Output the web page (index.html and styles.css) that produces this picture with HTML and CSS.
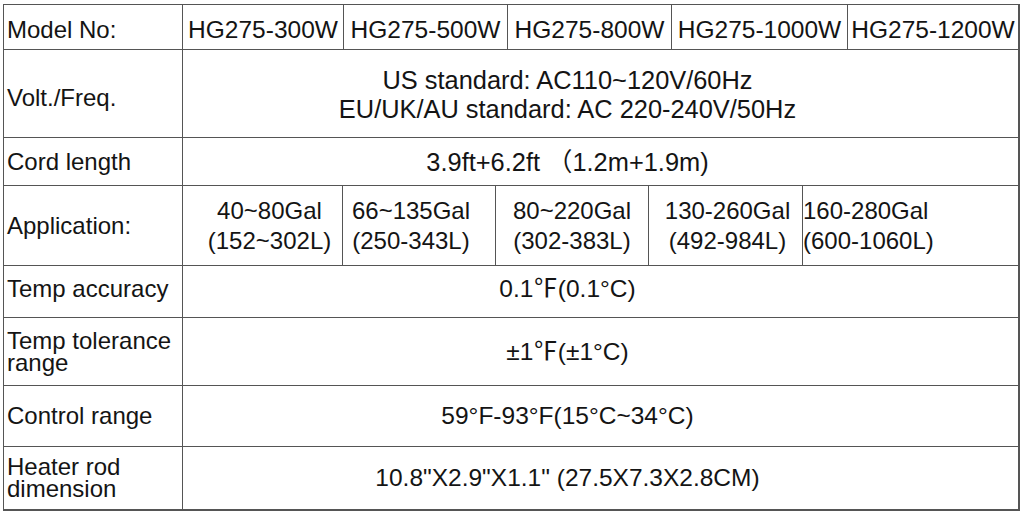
FILE: index.html
```html
<!DOCTYPE html>
<html lang="en">
<head>
<meta charset="utf-8">
<title>HG275 Specifications</title>
<link rel="stylesheet" href="styles.css">
</head>
<body>
<div class="sheet">
  <div class="row">
    <div class="label down">Model No:</div>
    <div class="split">
      <div class="model m1 down">HG275-300W</div>
      <div class="model m2 down">HG275-500W</div>
      <div class="model m3 down">HG275-800W</div>
      <div class="model m4 down">HG275-1000W</div>
      <div class="model m5 down">HG275-1200W</div>
    </div>
  </div>
  <div class="row">
    <div class="label down-more">Volt./Freq.</div>
    <div class="value big">
      <div>US standard: AC110~120V/60Hz</div>
      <div>EU/UK/AU standard: AC 220-240V/50Hz</div>
    </div>
  </div>
  <div class="row">
    <div class="label">Cord length</div>
    <div class="value big">3.9ft+6.2ft （1.2m+1.9m)</div>
  </div>
  <div class="row">
    <div class="label">Application:</div>
    <div class="split">
      <div class="app a1"><div>40~80Gal</div><div>(152~302L)</div></div>
      <div class="app a2"><div>66~135Gal</div><div>(250-343L)</div></div>
      <div class="app a3"><div>80~220Gal</div><div>(302-383L)</div></div>
      <div class="app a4"><div>130-260Gal</div><div>(492-984L)</div></div>
      <div class="app a5"><div>160-280Gal</div><div>(600-1060L)</div></div>
    </div>
  </div>
  <div class="row">
    <div class="label up">Temp accuracy</div>
    <div class="value up">0.1℉(0.1°C)</div>
  </div>
  <div class="row">
    <div class="label">Temp tolerance<br>range</div>
    <div class="value">±1℉(±1°C)</div>
  </div>
  <div class="row">
    <div class="label">Control range</div>
    <div class="value">59°F-93°F(15°C~34°C)</div>
  </div>
  <div class="row last">
    <div class="label">Heater rod<br>dimension</div>
    <div class="value">10.8"X2.9"X1.1" (27.5X7.3X2.8CM)</div>
  </div>
</div>
</body>
</html>
```

FILE: styles.css
```css
html, body {
  margin: 0;
  padding: 0;
  background: #ffffff;
}

body {
  font-family: "Liberation Sans", Arial, "Noto Sans CJK SC", sans-serif;
  color: #141414;
  font-size: 24px;
}

.sheet {
  margin: 4px 0 0 3px;
  width: 1017px;
  height: 507px;
  box-sizing: border-box;
  border-left: 1px solid #555;
  border-top: 1px solid #555;
  border-right: 2px solid #555;
  border-bottom: 2px solid #555;
  display: grid;
  grid-template-rows: 45px 88px 48px 80px 52px 68px 61px 62px;
}

.row {
  display: flex;
  box-sizing: border-box;
  border-bottom: 1px solid #555;
  min-height: 0;
}

.row.last {
  border-bottom: none;
}

.label {
  width: 179px;
  flex: none;
  box-sizing: border-box;
  border-right: 1px solid #555;
  padding-left: 3px;
  display: flex;
  align-items: center;
  font-size: 24px;
  line-height: 22px;
  white-space: nowrap;
}

.value {
  flex: 1;
  box-sizing: border-box;
  padding-right: 66px;
  display: flex;
  flex-direction: column;
  align-items: center;
  justify-content: center;
  font-size: 24.5px;
  line-height: 28px;
  white-space: nowrap;
}

.value.big {
  font-size: 25.4px;
  line-height: 29px;
  padding-top: 2px;
}

.down {
  padding-top: 6px;
}

.down-more {
  padding-top: 9px;
}

.up {
  padding-bottom: 6px;
}

.split {
  flex: 1;
  display: flex;
}

.model {
  box-sizing: border-box;
  border-right: 1px solid #555;
  display: flex;
  align-items: center;
  justify-content: center;
  font-size: 24.5px;
  white-space: nowrap;
}

.m1 { width: 161px; }
.m2 { width: 164px; }
.m3 { width: 164px; }
.m4 { width: 176px; }
.m5 { width: 170px; border-right: none; }

.app {
  box-sizing: border-box;
  border-right: 1px solid #555;
  display: flex;
  flex-direction: column;
  align-items: center;
  justify-content: center;
  font-size: 24px;
  line-height: 30px;
  white-space: nowrap;
}

.a1 { width: 160px; padding-left: 14px; }
.a2 { width: 153px; padding-right: 16px; }
.a3 { width: 153px; }
.a4 { width: 154px; padding-left: 4px; }
.a5 { width: 215px; border-right: none; align-items: flex-start; padding-left: 0; }
```
